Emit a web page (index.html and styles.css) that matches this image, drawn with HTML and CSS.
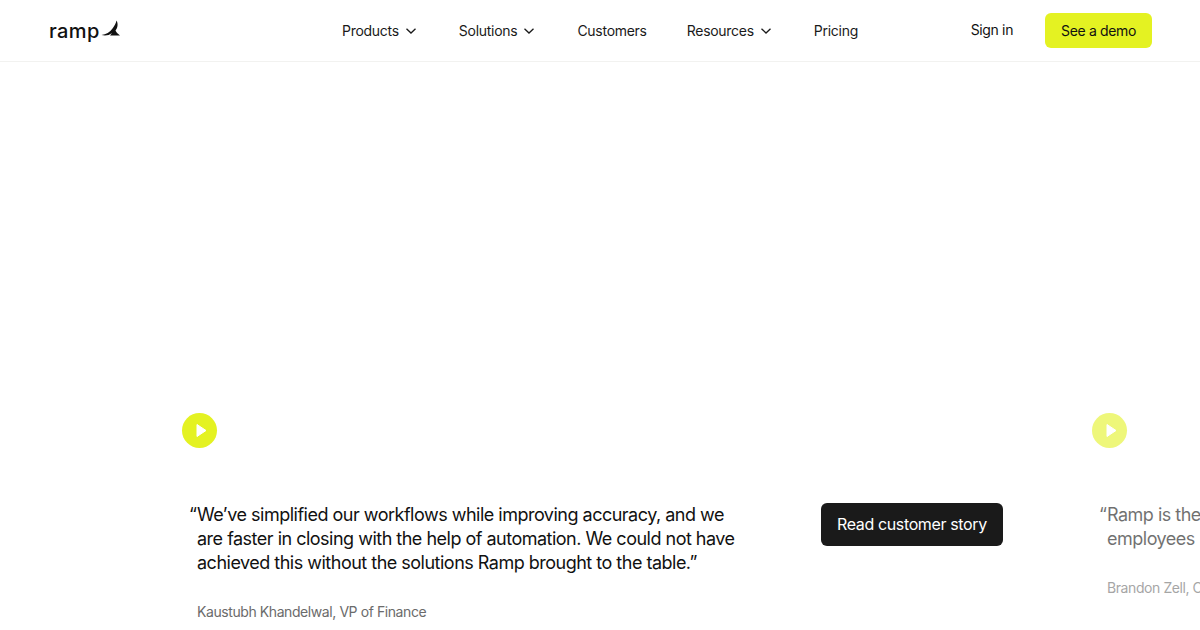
FILE: index.html
```html
<!DOCTYPE html>
<html>
<head>
  <title>Ramp customers</title>
  <link rel="stylesheet" href="styles.css">
</head>
<body>

<header class="topbar">
  <a class="logo">
    <span class="logo-text">ramp</span>
    <svg class="logo-wing" width="19" height="17" viewBox="0 0 19 17"><path d="M0.500 15C5 14.500 9 12 11.500 8.500C13.500 6 15 3 15.500 0.500C17.500 4 16.500 8 14.500 10.500C15.500 12.500 17 14 19 15.500L9 15.500L11 13C8 15.500 4 16 0.500 15Z" fill="#111"/></svg>
  </a>

  <nav class="nav">
    <a class="nav-item">Products <svg class="chevron" width="10" height="6" viewBox="0 0 10 6"><path d="M0.500 0.700L5 5L9.500 0.700" fill="none" stroke="#1a1a1a" stroke-width="1.300"/></svg></a>
    <a class="nav-item">Solutions <svg class="chevron" width="10" height="6" viewBox="0 0 10 6"><path d="M0.500 0.700L5 5L9.500 0.700" fill="none" stroke="#1a1a1a" stroke-width="1.300"/></svg></a>
    <a class="nav-item">Customers</a>
    <a class="nav-item">Resources <svg class="chevron" width="10" height="6" viewBox="0 0 10 6"><path d="M0.500 0.700L5 5L9.500 0.700" fill="none" stroke="#1a1a1a" stroke-width="1.300"/></svg></a>
    <a class="nav-item">Pricing</a>
  </nav>

  <div class="actions">
    <a class="sign-in">Sign in</a>
    <a class="demo">See a demo</a>
  </div>
</header>

<main class="carousel">
  <!-- Active slide -->
  <section class="slide">
    <div class="video">
      <span class="play"><svg width="14" height="15" viewBox="0 0 14 15"><path d="M4 1.500L13 7.500L4 13.500Z" fill="#fff" stroke="#fff" stroke-linejoin="round"/></svg></span>
    </div>
    <div class="story">
      <div class="story-text">
        <p class="quote">We’ve simplified our workflows while improving accuracy, and we are faster in closing with the help of automation. We could not have achieved this without the solutions Ramp brought to the table.”</p>
        <p class="author">Kaustubh Khandelwal, VP of Finance</p>
      </div>
      <a class="story-button">Read customer story</a>
    </div>
  </section>

  <!-- Next slide, faded and cut off by the window -->
  <section class="slide slide-next">
    <div class="video">
      <span class="play"><svg width="14" height="15" viewBox="0 0 14 15"><path d="M4 1.500L13 7.500L4 13.500Z" fill="#fff" stroke="#fff" stroke-linejoin="round"/></svg></span>
    </div>
    <div class="story">
      <div class="story-text">
        <p class="quote">Ramp is the<br>employees</p>
        <p class="author">Brandon Zell, C</p>
      </div>
    </div>
  </section>
</main>

</body>
</html>
```

FILE: styles.css
```css
body {
  margin: 0;
  height: 630px;
  overflow: hidden;
  background-color: #FFF;
  color: #111;
  font-family: Inter, 'Liberation Sans', sans-serif;
}
p {
  margin: 0;
}
.topbar {
  display: grid;
  grid-template-columns: 1fr auto 1fr;
  align-items: center;
  height: 61px;
  padding: 0 48px;
  border-bottom: 1px solid #F2F2F0;
}
.logo {
  display: flex;
  align-items: center;
  gap: 1px;
  margin-left: 1px;
}
.logo-text {
  font-size: 20px;
  font-weight: 500;
  letter-spacing: 0.4px;
  line-height: 24px;
}
.logo-wing {
  margin-top: -4px;
}
.nav {
  display: flex;
  align-items: center;
  gap: 40px;
  font-size: 14px;
  letter-spacing: -0.02em;
}
.nav-item {
  display: flex;
  align-items: center;
  gap: 7px;
  color: #1A1A1A;
  white-space: nowrap;
}
.chevron {
  margin: 1px 3px 0 0;
}
.actions {
  display: flex;
  align-items: center;
  justify-content: flex-end;
  gap: 32px;
  font-size: 14px;
  letter-spacing: -0.025em;
}
.demo {
  display: flex;
  align-items: center;
  height: 35px;
  padding: 0 16px;
  background-color: #E4F222;
  border-radius: 6px;
}
.sign-in {
  margin-top: -2px;
}
.carousel {
  display: flex;
  padding-left: 182px;
}
.slide {
  flex: none;
  width: 910px;
}
.slide-next {
  opacity: 0.6;
}
.video {
  height: 351px;
  display: flex;
  align-items: flex-end;
}
.play {
  display: flex;
  align-items: center;
  justify-content: center;
  width: 35px;
  height: 35px;
  margin-bottom: -35px;
  background-color: #E4F222;
  border-radius: 50%;
}
.story {
  display: flex;
  align-items: flex-start;
  padding: 90px 0 0 15px;
}
.story-text {
  width: 624px;
}
.quote {
  width: 545px;
  font-size: 18px;
  line-height: 24px;
  letter-spacing: -0.028em;
  position: relative;
}
.quote::before {
  content: "“";
  position: absolute;
  left: -8px;
}
.author {
  margin-top: 27px;
  font-size: 14px;
  line-height: 20px;
  letter-spacing: -0.03em;
  color: #6B6B6B;
}
.story-button {
  display: flex;
  align-items: center;
  height: 41px;
  padding: 0 16px 2px;
  background-color: #1A1A1A;
  color: #FFF;
  border-radius: 6px;
  font-size: 16px;
  letter-spacing: -0.023em;
  white-space: nowrap;
}
```
